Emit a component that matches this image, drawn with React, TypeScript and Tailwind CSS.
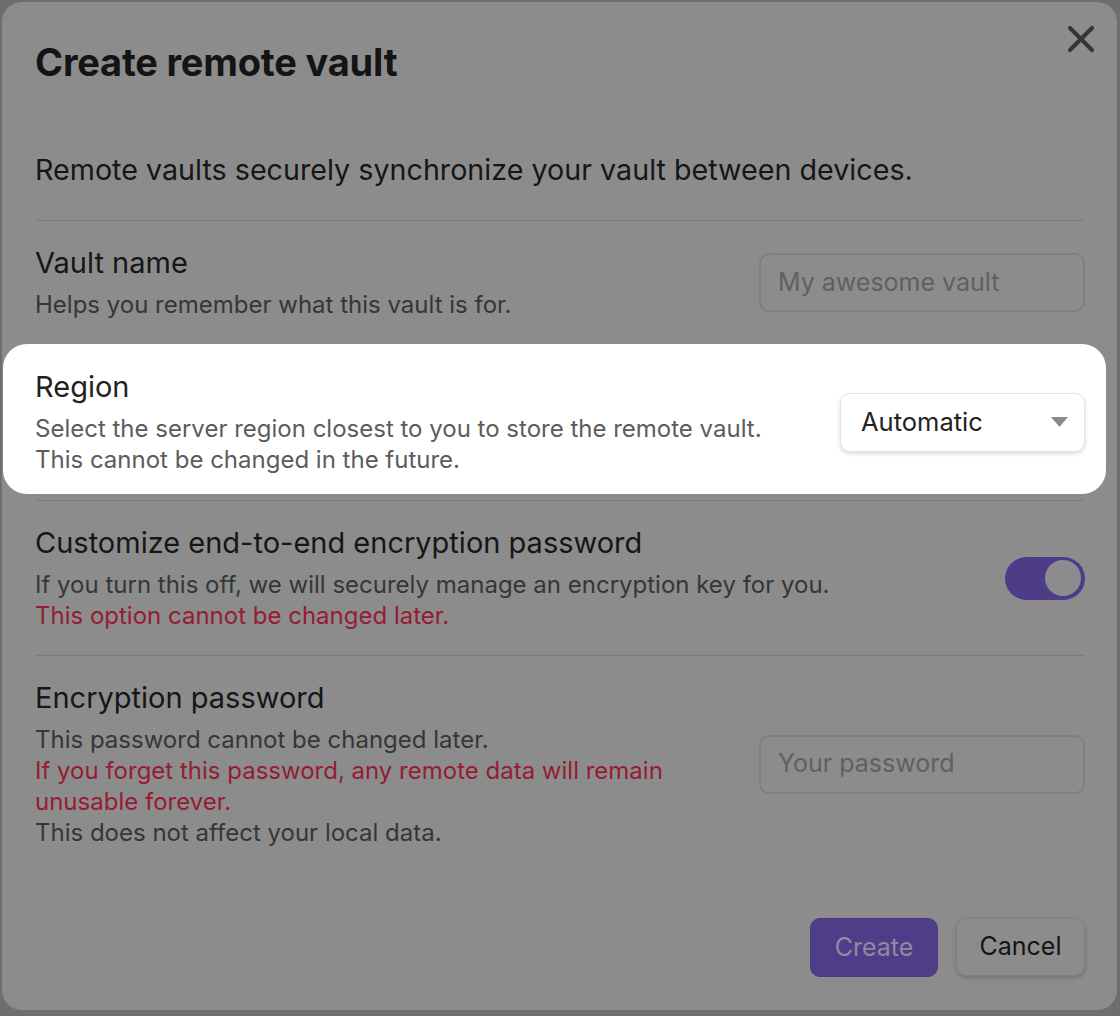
import { X } from "lucide-react";

function SettingRow({
  name,
  children,
  control,
}: {
  name: string;
  children: React.ReactNode;
  control: React.ReactNode;
}) {
  return (
    <div className="flex items-center gap-6 border-t border-[#7b7b7b] py-6">
      <div className="flex-1">
        <div className="text-[29px] leading-[36px] text-[#161616]">{name}</div>
        <div className="pt-2 text-[24px] leading-[31px] text-[#363636]">{children}</div>
      </div>
      {control}
    </div>
  );
}

export default function App() {
  return (
    <div
      className="h-[1016px] w-[1120px] bg-[#6e6e6e] pb-[6px] pl-[2px] pr-[3px] pt-[2px]"
      style={{ fontFamily: "Inter, 'Noto Sans', sans-serif" }}
    >
      <div className="relative h-full rounded-[20px] bg-[#8c8c8c] pl-[33px] pr-[32px] pt-[38px]">
        <button
          type="button"
          aria-label="Close"
          className="absolute right-[14px] top-[15px] text-[#353535]"
        >
          <X size={44} strokeWidth={2.2} />
        </button>

        <h1 className="text-[38px] font-bold leading-[44px] tracking-[-0.2px] text-[#141414]">
          Create remote vault
        </h1>

        <p className="mt-[66px] pb-[30px] text-[28.7px] leading-[40px] text-[#161616]">
          Remote vaults securely synchronize your vault between devices.
        </p>

        <SettingRow
          name="Vault name"
          control={
            <div className="flex h-[59px] w-[326px] items-center rounded-[10px] border-2 border-[#7f7f7f] px-[17px] text-[25px] text-[#606060]">
              My awesome vault
            </div>
          }
        >
          Helps you remember what this vault is for.
        </SettingRow>

        {/* highlighted row */}
        <div className="-ml-[32px] -mr-[21px] flex items-center gap-6 rounded-[24px] bg-white pb-[19px] pl-[32px] pr-[21px] pt-[25px]">
          <div className="flex-1">
            <div className="text-[29px] leading-[36px] text-[#222]">Region</div>
            <div className="pt-2 text-[24px] leading-[31px] text-[#5c5c5c]">
              Select the server region closest to you to store the remote vault.
              <br />
              This cannot be changed in the future.
            </div>
          </div>
          <div className="flex h-[59px] w-[245px] items-center justify-between rounded-[10px] border border-[#e4e4e4] bg-white pl-[20px] pr-[16px] text-[25.5px] text-[#222] shadow-[0_2px_4px_rgba(0,0,0,0.14)]">
            <span>Automatic</span>
            <svg width="17" height="10" viewBox="0 0 17 10">
              <path d="M0 0 L17 0 L8.5 10 Z" fill="#8a8a8a" />
            </svg>
          </div>
        </div>

        <div className="mt-[6px]">
          <SettingRow
            name="Customize end-to-end encryption password"
            control={
              <div className="flex h-[43px] w-[80px] items-center justify-end rounded-full bg-[#4f3c88] pr-[4px]">
                <div className="h-[36px] w-[36px] rounded-full bg-[#8c8c8c]" />
              </div>
            }
          >
            If you turn this off, we will securely manage an encryption key for you.
            <div className="text-[#951c32]">This option cannot be changed later.</div>
          </SettingRow>
        </div>

        <SettingRow
          name="Encryption password"
          control={
            <div className="flex h-[59px] w-[326px] items-center rounded-[10px] border-2 border-[#7f7f7f] px-[17px] text-[25px] text-[#606060]">
              Your password
            </div>
          }
        >
          This password cannot be changed later.
          <div className="w-[660px] text-[#951c32]">
            If you forget this password, any remote data will remain unusable forever.
          </div>
          This does not affect your local data.
        </SettingRow>

        <div className="mt-[46px] flex justify-end gap-[18px]">
          <button
            type="button"
            className="h-[59px] w-[128px] rounded-[10px] border border-[#4a3882] bg-[#503d89] text-[25px] text-[#8f8a9e]"
          >
            Create
          </button>
          <button
            type="button"
            className="h-[58px] w-[129px] rounded-[10px] border border-[#808080] bg-[#8c8c8c] text-[25px] text-[#141414] shadow-[0_2px_4px_rgba(0,0,0,0.18)]"
          >
            Cancel
          </button>
        </div>
      </div>
    </div>
  );
}
